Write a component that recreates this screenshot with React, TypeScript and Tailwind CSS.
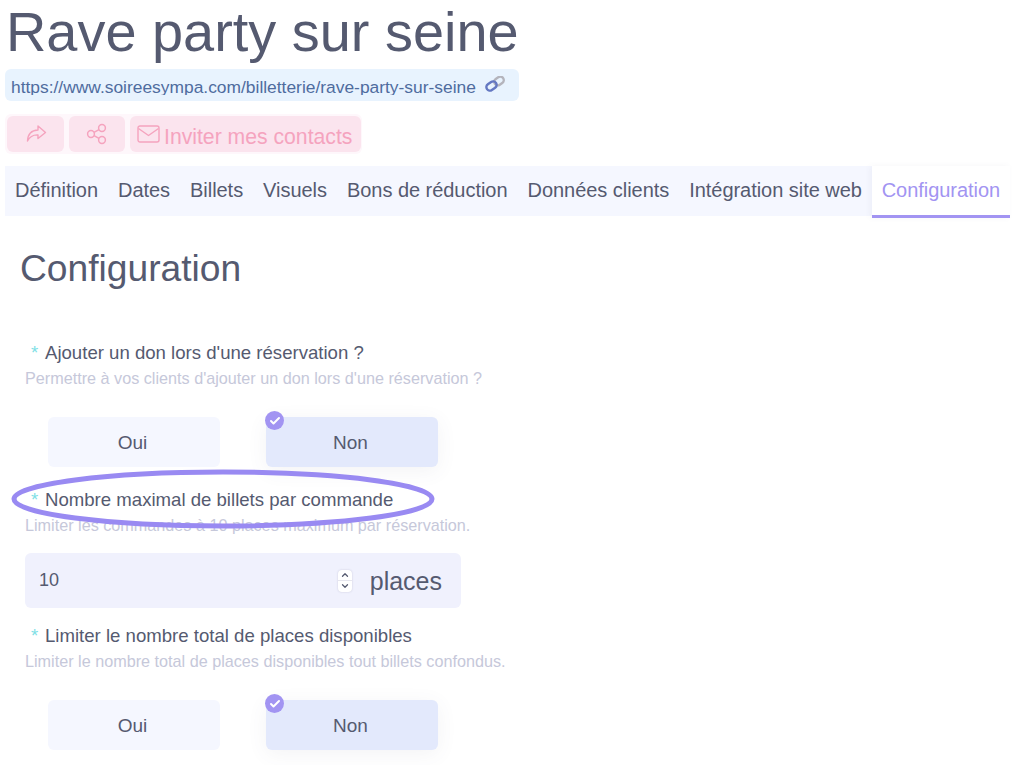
import { Check, ChevronDown, ChevronUp } from "lucide-react";

const tabs = [
  "Définition",
  "Dates",
  "Billets",
  "Visuels",
  "Bons de réduction",
  "Données clients",
  "Intégration site web",
];

function YesNo() {
  return (
    <div className="ml-[48px] mt-[29px] flex gap-[46px]">
      <div className="flex h-[50px] w-[172px] items-center justify-center rounded-md bg-[#f5f7ff] pr-[3px] pt-[2px] text-[19px] text-[#555a70]">
        Oui
      </div>
      <div className="relative flex h-[50px] w-[172px] items-center justify-center rounded-md bg-[#e3e9fc] pr-[3px] pt-[2px] text-[19px] text-[#555a70] shadow-[0_4px_20px_rgba(80,80,120,0.07)]">
        Non
        <span className="absolute -left-[1px] -top-[6px] flex h-[19px] w-[19px] items-center justify-center rounded-full bg-[#a294f2]">
          <Check size={12} strokeWidth={4} className="text-white" />
        </span>
      </div>
    </div>
  );
}

function Label({ title, help }: { title: string; help: string }) {
  return (
    <div>
      <div className="ml-[31px] flex h-[24px] items-center text-[18.6px] text-[#555a70]">
        <span className="mr-[5px] w-[9px] text-[#7fdfe6]">*</span>
        {title}
      </div>
      <div className="ml-[25px] mt-[3px] text-[16.2px] leading-[20px] text-[#c6c8da]">{help}</div>
    </div>
  );
}

export default function App() {
  return (
    <div className="relative h-[765px] w-[1024px] overflow-hidden bg-white font-['Liberation_Sans',sans-serif]">
      <h1 className="ml-[6px] h-[69px] pt-[1px] text-[55.9px] leading-[62px] text-[#555a70]">Rave party sur seine</h1>

      <div className="ml-[5px] flex h-[32px] w-[514px] items-start rounded-md bg-[#e8f3fe] pl-[6px] pt-[8px] text-[17.4px] text-[#4f6c9e]">
        <span className="h-[18px] overflow-hidden leading-[20px]">
          https://www.soireesympa.com/billetterie/rave-party-sur-seine
        </span>
        <svg className="-mt-[1px] ml-[8px]" width="22" height="18" viewBox="0 0 22 18" fill="none" strokeWidth="2.4">
          <rect x="10" y="1.5" width="10" height="7" rx="3.5" transform="rotate(-35 15 5)" stroke="#b4b4bc" />
          <rect x="2" y="6.5" width="11" height="7" rx="3.5" transform="rotate(-35 7.5 10)" stroke="#6478c2" />
        </svg>
      </div>

      <div className="ml-[5px] mt-[13px] flex h-[40px] w-[357px] items-center gap-[5px] rounded-md bg-[#fef7fb] pl-[2px]">
        <div className="flex h-[36px] w-[57px] items-center justify-center rounded-md bg-[#fbe4ee]">
          <svg width="22" height="20" viewBox="0 0 22 20" fill="none" stroke="#f5a3be" strokeWidth="1.4" strokeLinejoin="round">
            <path d="M13 2l7.5 6.5L13 14.5v-3.6c-4.5-.2-8 1-10.5 6.1C2.8 10.500 6.500 6.300 13 6z" />
          </svg>
        </div>
        <div className="flex h-[36px] w-[56px] items-center justify-center rounded-md bg-[#fbe4ee]">
          <svg width="22" height="22" viewBox="0 0 22 22" fill="none" stroke="#f5a3be" strokeWidth="1.5">
            <circle cx="5" cy="11" r="3.400" />
            <circle cx="16" cy="5" r="3.400" />
            <circle cx="16" cy="17" r="3.400" />
            <path d="M8 9.400l5-2.800M8 12.600l5 2.800" />
          </svg>
        </div>
        <div className="flex h-[36px] w-[231px] items-center gap-[4px] rounded-md bg-[#fbe4ee] pl-[7px] text-[21.2px] text-[#f5a3be]">
          <svg className="-mt-[1px]" width="23" height="18" viewBox="0 0 23 18" fill="none" stroke="#f5a3be" strokeWidth="1.4" strokeLinejoin="round">
            <rect x="1" y="1" width="21" height="16" rx="2" />
            <path d="M1.500 3.500l10 7 10-7" />
          </svg>
          <span className="pt-[5px]">Inviter mes contacts</span>
        </div>
      </div>

      <div className="ml-[5px] mt-[12px] flex h-[52px] w-[1005px]">
        <div className="flex h-[50px] items-center gap-[20px] bg-[#f5f7ff] pb-[2px] pl-[10px] pr-[10px] text-[20px] tracking-[-0.04px] text-[#555a70]">
          {tabs.map((tab) => (
            <span key={tab}>{tab}</span>
          ))}
        </div>
        <div className="flex h-[52px] flex-1 items-center justify-center border-b-[3px] border-[#a294f2] bg-white pb-[2px] text-[20px] tracking-[-0.04px] text-[#a294f2] shadow-[-2px_0_6px_rgba(80,80,120,0.05)]">
          Configuration
        </div>
      </div>

      <h2 className="ml-[20px] mt-[27px] text-[37.200px] leading-[46px] text-[#555a70]">Configuration</h2>

      <div className="mt-[50px]">
        <Label
          title="Ajouter un don lors d'une réservation ?"
          help="Permettre à vos clients d'ajouter un don lors d'une réservation ?"
        />
        <YesNo />
      </div>

      <div className="mt-[21px]">
        <Label
          title="Nombre maximal de billets par commande"
          help="Limiter les commandes à 10 places maximum par réservation."
        />
        <div className="ml-[25px] mt-[18px] flex h-[55px] w-[436px] items-center rounded-md bg-[#f0f1fd] pl-[14px] pr-[19px] text-[#555a70]">
          <span className="flex-1 text-[18px]">10</span>
          <span className="mr-[18px] flex h-[22px] w-[14px] flex-col items-center justify-center rounded-[4px] bg-white shadow-[0_0_2px_rgba(80,80,120,0.25)]">
            <ChevronUp size={10} strokeWidth={3} />
            <span className="h-px w-full bg-[#e6e6ee]" />
            <ChevronDown size={10} strokeWidth={3} />
          </span>
          <span className="pt-[2px] text-[25px]">places</span>
        </div>
      </div>

      <div className="mt-[16px]">
        <Label
          title="Limiter le nombre total de places disponibles"
          help="Limiter le nombre total de places disponibles tout billets confondus."
        />
        <YesNo />
      </div>

      {/* highlight around the label */}
      <svg className="absolute left-[10px] top-[468px]" width="426" height="62" viewBox="0 0 426 62" fill="none">
        <ellipse cx="213" cy="31" rx="209" ry="27" stroke="#998af2" strokeWidth="5" />
      </svg>
    </div>
  );
}
